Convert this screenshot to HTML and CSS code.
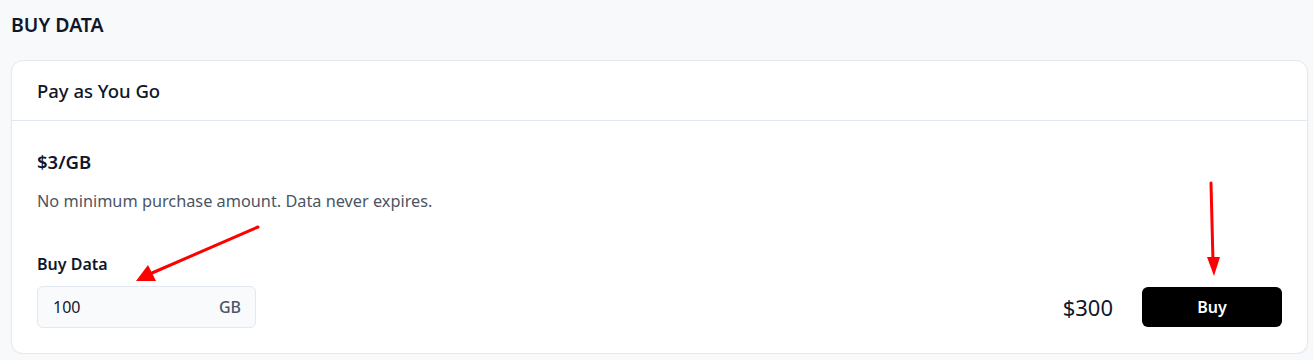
FILE: index.html
```html
<!DOCTYPE html>
<html>
<head>
<meta charset="utf-8">
<link rel="stylesheet" href="styles.css">
</head>
<body>
<div class="page">
  <h1 class="title">BUY DATA</h1>
  <div class="card">
    <div class="card-header">Pay as You Go</div>
    <div class="card-body">
      <div class="price">$3/GB</div>
      <p class="desc">No minimum purchase amount. Data never expires.</p>
      <div class="row">
        <div class="field">
          <label class="label">Buy Data</label>
          <div class="input">
            <span class="value">100</span>
            <span class="unit">GB</span>
          </div>
        </div>
        <div class="actions">
          <span class="total">$300</span>
          <button class="buy">Buy</button>
        </div>
      </div>
    </div>
  </div>
</div>
<svg class="arrows" width="1313" height="360" viewBox="0 0 1313 360">
  <line x1="258" y1="227" x2="152" y2="273" stroke="#f00" stroke-width="3" stroke-linecap="round"/>
  <polygon points="136,281 148,265 156,281" fill="#f00"/>
  <line x1="1211" y1="183" x2="1213" y2="262" stroke="#f00" stroke-width="3" stroke-linecap="round"/>
  <polygon points="1207,257 1220,257 1214,276" fill="#f00"/>
</svg>
</body>
</html>
```
FILE: styles.css
```css
html, body {
  margin: 0;
  padding: 0;
  background: #f8f9fb;
  font-family: "Noto Sans", "Open Sans", sans-serif;
  color: #111827;
}
.page {
  padding: 11px 5px 0 11px;
}
.title {
  margin: 0;
  font-size: 19.5px;
  font-weight: 600;
  line-height: 28px;
  color: #0f172a;
}
.card {
  margin-top: 21px;
  background: #fff;
  border: 1px solid #e5e9ef;
  border-radius: 12px;
  box-shadow: 0 1px 2px rgba(0,0,0,0.04);
}
.card-header {
  height: 60px;
  box-sizing: border-box;
  padding: 0 25px;
  display: flex;
  align-items: center;
  font-size: 18.5px;
  font-weight: 500;
  color: #0f172a;
  border-bottom: 1px solid #e2e8f0;
}
.card-body {
  padding: 26px 25px 25px 25px;
}
.price {
  font-size: 18.5px;
  font-weight: 600;
  line-height: 30px;
  color: #0f172a;
}
.desc {
  margin: 13px 0 0 0;
  font-size: 16.3px;
  line-height: 22px;
  color: #4b5563;
}
.row {
  margin-top: 41px;
  display: flex;
  justify-content: space-between;
  align-items: flex-end;
}
.label {
  display: block;
  font-size: 16px;
  font-weight: 600;
  line-height: 22px;
  color: #0f172a;
  margin-bottom: 11px;
}
.input {
  width: 219px;
  height: 42px;
  box-sizing: border-box;
  background: #f8fafc;
  border: 1px solid #e2e8f0;
  border-radius: 6px;
  padding: 0 14px 0 15px;
  display: flex;
  justify-content: space-between;
  align-items: center;
  font-size: 16px;
}
.value { color: #111827; }
.unit { color: #4b5563; font-weight: 500; }
.actions {
  display: flex;
  align-items: center;
  gap: 29px;
  margin-bottom: 1px;
}
.total {
  font-size: 22px;
  color: #0f172a;
}
.buy {
  width: 140px;
  height: 40px;
  border: none;
  border-radius: 6px;
  background: #000;
  color: #fff;
  font-family: inherit;
  font-size: 16px;
  font-weight: 600;
  cursor: pointer;
}
.arrows {
  position: absolute;
  left: 0;
  top: 0;
  pointer-events: none;
}
```
